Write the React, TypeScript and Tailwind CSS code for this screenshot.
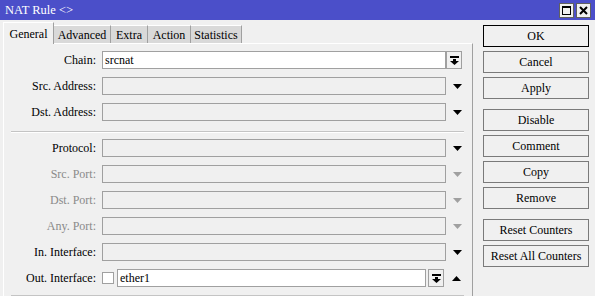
import React from 'react';

const DownArrow = ({ gray }: { gray?: boolean }) => (
  <svg width="9" height="5" viewBox="0 0 9 5">
    <polygon points="0,0 9,0 4.5,5" fill={gray ? '#a0a0a0' : '#000'} />
  </svg>
);

const UpArrow = () => (
  <svg width="9" height="5" viewBox="0 0 9 5">
    <polygon points="0,5 9,5 4.5,0" fill="#000" />
  </svg>
);

const DropButton = () => (
  <div className="w-[16px] h-[18px] border border-[#a0a0a0] bg-[#f0f0f0] flex items-center justify-center">
    <svg width="9" height="9" viewBox="0 0 9 9">
      <rect x="0" y="0" width="9" height="2" fill="#000" />
      <rect x="3" y="3" width="3" height="2" fill="#000" />
      <polygon points="0,5 9,5 4.5,9" fill="#000" />
    </svg>
  </div>
);

type Row = { label: string; disabled?: boolean; value?: string; kind: 'select' | 'arrow' | 'iface' };

const topRows: Row[] = [
  { label: 'Chain:', value: 'srcnat', kind: 'select' },
  { label: 'Src. Address:', kind: 'arrow' },
  { label: 'Dst. Address:', kind: 'arrow' },
];

const bottomRows: Row[] = [
  { label: 'Protocol:', kind: 'arrow' },
  { label: 'Src. Port:', kind: 'arrow', disabled: true },
  { label: 'Dst. Port:', kind: 'arrow', disabled: true },
  { label: 'Any. Port:', kind: 'arrow', disabled: true },
  { label: 'In. Interface:', kind: 'arrow' },
  { label: 'Out. Interface:', value: 'ether1', kind: 'iface' },
];

const FieldRow = ({ row }: { row: Row }) => (
  <div className="flex items-center h-[26px]">
    <div className={`w-[92px] text-right leading-none ${row.disabled ? 'text-[#8a8a8a]' : 'text-black'}`}>{row.label}</div>
    <div className="ml-[6px] flex-1 flex items-center">
      {row.kind === 'iface' && (
        <div className="w-[12px] h-[12px] border border-[#a0a0a0] bg-white mr-[3px]" />
      )}
      <div
        className={`flex-1 h-[18px] border border-[#a0a0a0] px-[2px] flex items-center leading-none ${
          row.value ? 'bg-white' : 'bg-[#f0f0f0]'
        }`}
      >
        {row.value}
      </div>
      {row.kind === 'iface' && (
        <div className="ml-[2px] mr-[2px]">
          <DropButton />
        </div>
      )}
    </div>
    <div className="w-[18px] flex items-center">
      {row.kind === 'select' && <DropButton />}
      {row.kind === 'arrow' && (
        <div className="pl-[7px] flex">
          <DownArrow gray={row.disabled} />
        </div>
      )}
      {row.kind === 'iface' && (
        <div className="pl-[6px] flex">
          <UpArrow />
        </div>
      )}
    </div>
  </div>
);

const Separator = () => (
  <div className="ml-[7px]">
    <div className="h-px bg-[#c4c4c4]" />
    <div className="h-px bg-white" />
  </div>
);

const tabs = [
  { name: 'Advanced', w: 'w-[57px]' },
  { name: 'Extra', w: 'w-[37px]' },
  { name: 'Action', w: 'w-[43px]' },
  { name: 'Statistics', w: 'w-[51px]' },
];

const buttonGroups = [
  ['OK', 'Cancel', 'Apply'],
  ['Disable', 'Comment', 'Copy', 'Remove'],
  ['Reset Counters', 'Reset All Counters'],
];

export default function App() {
  return (
    <div className="w-[595px] h-[296px] bg-[#f0f0f0] overflow-hidden text-[12px] text-black flex flex-col font-['Liberation_Serif','Times_New_Roman',serif]">
      {/* Title bar */}
      <div className="h-[20px] bg-[#4b4fc9] flex items-center justify-between pl-[5px] pr-[4px] shrink-0">
        <span className="text-white text-[12.5px] leading-none">NAT Rule &lt;&gt;</span>
        <div className="flex gap-[2px]">
          <div className="w-[15px] h-[15px] bg-[#f0f0f0] border border-[#606060] flex items-center justify-center">
            <div className="w-[9px] h-[9px] border border-black border-t-2" />
          </div>
          <div className="w-[15px] h-[15px] bg-[#f0f0f0] border border-[#606060] flex items-center justify-center">
            <svg width="9" height="9" viewBox="0 0 9 9">
              <path d="M1 1 L8 8 M8 1 L1 8" stroke="#000" strokeWidth="2" />
            </svg>
          </div>
        </div>
      </div>

      <div className="flex flex-1 min-h-0">
        {/* Left: tabs + panel */}
        <div className="w-[473px] flex flex-col">
          <div className="h-[23px] flex items-end pl-[3px] shrink-0">
            <div className="w-[51px] h-[22px] bg-[#f0f0f0] border-l border-t border-white border-r border-r-[#a0a0a0] flex items-center justify-center leading-none relative -mb-px z-10">
              General
            </div>
            {tabs.map((t) => (
              <div
                key={t.name}
                className={`${t.w} h-[18px] bg-[#d9d9d9] border-t border-white border-r border-r-[#a0a0a0] flex items-center justify-center leading-none`}
              >
                {t.name}
              </div>
            ))}
          </div>
          <div className="flex-1 ml-[3px] border-l border-t border-white border-r border-r-[#a0a0a0] pt-[3px] pr-[8px]">
            {topRows.map((r) => (
              <FieldRow key={r.label} row={r} />
            ))}
            <div className="mt-[6px] mb-[2px]">
              <Separator />
            </div>
            {bottomRows.map((r) => (
              <FieldRow key={r.label} row={r} />
            ))}
            <div className="mt-[4px]">
              <Separator />
            </div>
          </div>
        </div>

        {/* Right: buttons */}
        <div className="ml-[10px] w-[106px] pt-[5px] flex flex-col gap-[10px]">
          {buttonGroups.map((g, gi) => (
            <div key={gi} className="flex flex-col gap-[4px]">
              {g.map((b) => (
                <div
                  key={b}
                  className={`h-[22px] flex items-center justify-center leading-none bg-[#f0f0f0] border ${
                    b === 'OK' ? 'border-black' : 'border-[#7a7a7a]'
                  }`}
                >
                  {b}
                </div>
              ))}
            </div>
          ))}
        </div>
      </div>
    </div>
  );
}
